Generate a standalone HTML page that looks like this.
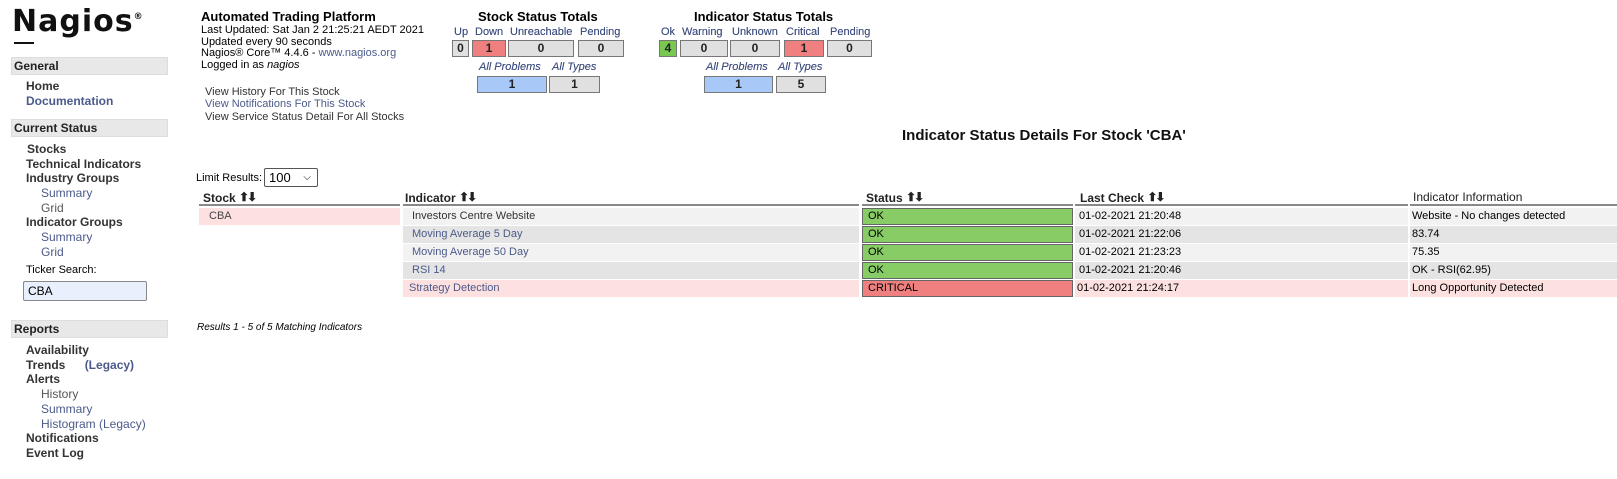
<!DOCTYPE html>
<html><head><meta charset="utf-8"><style>
body{margin:0;width:1617px;height:479px;background:#fff;font-family:"Liberation Sans",Arial,sans-serif;color:#000;position:relative;overflow:hidden}
.a{position:absolute;white-space:nowrap}
.hd{position:absolute;left:11px;width:157px;height:18px;background:#e8e8e8;border:1px solid #ddd;box-sizing:border-box;font-weight:bold;font-size:12px;line-height:17px;padding-left:2px;color:#222}
.nb{font-size:12px;font-weight:bold;color:#333}
.nl{font-size:12px;color:#4b5a8a}
.ns{font-size:12px;color:#555}
.t{font-size:11px}
.box{position:absolute;height:17px;border:1px solid #777;box-sizing:border-box;background:#e0e0e0;font-size:12px;font-weight:bold;text-align:center;line-height:15px;color:#222}
.lab{position:absolute;font-size:11px;color:#3f4f80;white-space:nowrap;text-shadow:0 0 0.3px #3f4f80}
.row{position:absolute;height:17px;font-size:11px;line-height:17px;box-sizing:border-box;white-space:nowrap;overflow:hidden}
.th{position:absolute;top:190px;font-size:12px;font-weight:bold;color:#222;height:16px;border-bottom:2px solid #888;box-sizing:content-box}
.ar{font-size:12px;letter-spacing:-2px;vertical-align:1px}
</style></head><body>
<div class="a" style="left:12px;top:4px;font-family:'DejaVu Sans',sans-serif;font-size:30px;font-weight:bold;letter-spacing:1px;color:#111">Nagios<sup style="font-size:9px;vertical-align:top;position:relative;top:8px">®</sup></div>
<div class="a" style="left:14px;top:42px;width:20px;height:2px;background:#111"></div>

<div class="hd" style="top:57px">General</div>
<div class="a nb" style="left:26px;top:79px">Home</div>
<div class="a nl" style="left:26px;top:94px;font-weight:bold">Documentation</div>
<div class="hd" style="top:119px">Current Status</div>
<div class="a nb" style="left:27px;top:142px">Stocks</div>
<div class="a nb" style="left:26px;top:157px">Technical Indicators</div>
<div class="a nb" style="left:26px;top:171px">Industry Groups</div>
<div class="a ns" style="left:41px;top:186px;color:#4b5a8a">Summary</div>
<div class="a ns" style="left:41px;top:201px">Grid</div>
<div class="a nb" style="left:26px;top:215px">Indicator Groups</div>
<div class="a ns" style="left:41px;top:230px;color:#4b5a8a">Summary</div>
<div class="a ns" style="left:41px;top:245px;color:#4b5a8a">Grid</div>
<div class="a t" style="left:26px;top:264px">Ticker Search:</div>
<div class="a" style="left:23px;top:281px;width:124px;height:20px;border:1px solid #888;border-radius:2px;background:#e8f0fe;box-sizing:border-box;font-size:12px;line-height:18px;padding-left:4px">CBA</div>
<div class="hd" style="top:320px">Reports</div>
<div class="a nb" style="left:26px;top:343px">Availability</div>
<div class="a nb" style="left:26px;top:358px">Trends <span style="color:#4b5a8a;margin-left:16px">(Legacy)</span></div>
<div class="a nb" style="left:26px;top:372px">Alerts</div>
<div class="a ns" style="left:41px;top:387px">History</div>
<div class="a ns" style="left:41px;top:402px;color:#4b5a8a">Summary</div>
<div class="a ns" style="left:41px;top:417px;color:#4b5a8a">Histogram (Legacy)</div>
<div class="a nb" style="left:26px;top:431px">Notifications</div>
<div class="a nb" style="left:26px;top:446px">Event Log</div>

<div class="a" style="left:201px;top:9px;font-size:13px;font-weight:bold">Automated Trading Platform</div>
<div class="a t" style="left:201px;top:25px;line-height:11.5px">Last Updated: Sat Jan 2 21:25:21 AEDT 2021<br>Updated every 90 seconds<br>Nagios® Core™ 4.4.6 - <span style="color:#4b5a8a">www.nagios.org</span><br>Logged in as <i>nagios</i></div>
<div class="a t" style="left:205px;top:86px;line-height:12.3px;color:#333">View History For This Stock<br><span style="color:#4b5a8a">View Notifications For This Stock</span><br>View Service Status Detail For All Stocks</div>

<div class="a" style="left:478px;top:9px;font-size:13px;font-weight:bold">Stock Status Totals</div>
<div class="lab" style="left:454px;top:26px">Up</div>
<div class="lab" style="left:475px;top:26px">Down</div>
<div class="lab" style="left:510px;top:26px">Unreachable</div>
<div class="lab" style="left:580px;top:26px">Pending</div>
<div class="box" style="left:452px;top:40px;width:17px">0</div>
<div class="box" style="left:472px;top:40px;width:34px;background:#f08080">1</div>
<div class="box" style="left:508px;top:40px;width:66px">0</div>
<div class="box" style="left:578px;top:40px;width:46px">0</div>
<div class="lab" style="left:479px;top:61px;font-style:italic">All Problems</div>
<div class="lab" style="left:552px;top:61px;font-style:italic">All Types</div>
<div class="box" style="left:477px;top:76px;width:70px;background:#a8c8f8">1</div>
<div class="box" style="left:549px;top:76px;width:51px">1</div>

<div class="a" style="left:694px;top:9px;font-size:13px;font-weight:bold">Indicator Status Totals</div>
<div class="lab" style="left:661px;top:26px">Ok</div>
<div class="lab" style="left:682px;top:26px">Warning</div>
<div class="lab" style="left:732px;top:26px">Unknown</div>
<div class="lab" style="left:786px;top:26px">Critical</div>
<div class="lab" style="left:830px;top:26px">Pending</div>
<div class="box" style="left:659px;top:40px;width:18px;background:#78c850">4</div>
<div class="box" style="left:680px;top:40px;width:48px">0</div>
<div class="box" style="left:730px;top:40px;width:50px">0</div>
<div class="box" style="left:784px;top:40px;width:40px;background:#f08080">1</div>
<div class="box" style="left:827px;top:40px;width:45px">0</div>
<div class="lab" style="left:706px;top:61px;font-style:italic">All Problems</div>
<div class="lab" style="left:778px;top:61px;font-style:italic">All Types</div>
<div class="box" style="left:704px;top:76px;width:69px;background:#a8c8f8">1</div>
<div class="box" style="left:776px;top:76px;width:50px">5</div>

<div class="a" style="left:902px;top:127px;font-size:15px;font-weight:bold;color:#111">Indicator Status Details For Stock 'CBA'</div>

<div class="a t" style="left:196px;top:172px">Limit Results: </div>
<div class="a" style="left:264px;top:168px;width:54px;height:19px;border:1px solid #555;border-radius:2px;box-sizing:border-box;font-size:13px;line-height:17px;padding-left:4px">100 <span style="position:absolute;right:6px;top:0;font-size:10px">&#x2335;</span></div>

<div class="th" style="left:199px;width:201px;padding-left:4px;box-sizing:border-box">Stock <span class="ar">&#11014;&#11015;</span></div>
<div class="th" style="left:403px;width:456px;padding-left:2px;box-sizing:border-box">Indicator <span class="ar">&#11014;&#11015;</span></div>
<div class="th" style="left:862px;width:211px;padding-left:4px;box-sizing:border-box">Status <span class="ar">&#11014;&#11015;</span></div>
<div class="th" style="left:1075px;width:333px;padding-left:5px;box-sizing:border-box">Last Check <span class="ar">&#11014;&#11015;</span></div>
<div class="th" style="left:1410px;width:207px;padding-left:3px;box-sizing:border-box;font-weight:normal">Indicator Information</div>

<div class="row" style="left:199px;top:208px;width:201px;background:#fde0e0;padding-left:10px;color:#444">CBA</div>

<div class="row" style="left:403px;top:208px;width:456px;background:#f2f2f2;padding-left:9px;color:#333">Investors Centre Website</div>
<div class="row" style="left:403px;top:226px;width:456px;background:#e4e4e4;padding-left:9px;color:#4b5a8a">Moving Average 5 Day</div>
<div class="row" style="left:403px;top:244px;width:456px;background:#f2f2f2;padding-left:9px;color:#4b5a8a">Moving Average 50 Day</div>
<div class="row" style="left:403px;top:262px;width:456px;background:#e4e4e4;padding-left:9px;color:#4b5a8a">RSI 14</div>
<div class="row" style="left:403px;top:280px;width:456px;background:#fde0e0;padding-left:6px;color:#4b5a8a">Strategy Detection</div>

<div class="row" style="left:862px;top:208px;width:211px;background:#88cc66;border:1px solid #666;padding-left:5px;line-height:15px">OK</div>
<div class="row" style="left:862px;top:226px;width:211px;background:#88cc66;border:1px solid #666;padding-left:5px;line-height:15px">OK</div>
<div class="row" style="left:862px;top:244px;width:211px;background:#88cc66;border:1px solid #666;padding-left:5px;line-height:15px">OK</div>
<div class="row" style="left:862px;top:262px;width:211px;background:#88cc66;border:1px solid #666;padding-left:5px;line-height:15px">OK</div>
<div class="row" style="left:862px;top:280px;width:211px;background:#f08080;border:1px solid #666;padding-left:5px;line-height:15px">CRITICAL</div>

<div class="row" style="left:1075px;top:208px;width:333px;background:#f2f2f2;padding-left:4px">01-02-2021 21:20:48</div>
<div class="row" style="left:1075px;top:226px;width:333px;background:#e4e4e4;padding-left:4px">01-02-2021 21:22:06</div>
<div class="row" style="left:1075px;top:244px;width:333px;background:#f2f2f2;padding-left:4px">01-02-2021 21:23:23</div>
<div class="row" style="left:1075px;top:262px;width:333px;background:#e4e4e4;padding-left:4px">01-02-2021 21:20:46</div>
<div class="row" style="left:1075px;top:280px;width:333px;background:#fde0e0;padding-left:2px">01-02-2021 21:24:17</div>

<div class="row" style="left:1410px;top:208px;width:207px;background:#f2f2f2;padding-left:2px">Website - No changes detected</div>
<div class="row" style="left:1410px;top:226px;width:207px;background:#e4e4e4;padding-left:2px">83.74</div>
<div class="row" style="left:1410px;top:244px;width:207px;background:#f2f2f2;padding-left:2px">75.35</div>
<div class="row" style="left:1410px;top:262px;width:207px;background:#e4e4e4;padding-left:2px">OK - RSI(62.95)</div>
<div class="row" style="left:1410px;top:280px;width:207px;background:#fde0e0;padding-left:2px">Long Opportunity Detected</div>

<div class="a t" style="left:197px;top:322px;font-style:italic;font-size:10px">Results 1 - 5 of 5 Matching Indicators</div>
</body></html>
